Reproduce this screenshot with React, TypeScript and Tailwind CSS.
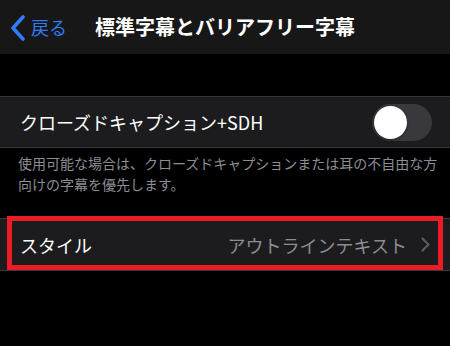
import React from "react";

export default function App() {
  const jp = { fontFamily: '"Noto Sans CJK JP", "Noto Sans", sans-serif' };
  return (
    <div className="w-[450px] h-[346px] bg-black overflow-hidden" style={jp}>
      {/* Header */}
      <div className="relative h-[54px] bg-[#171717] flex items-center">
        <div className="flex items-center pl-[10px] gap-[5px] text-[#2f7cf6]">
          <svg width="16" height="26" viewBox="0 0 16 26" className="mt-[1px]">
            <polyline
              points="13,2 3,13 13,24"
              fill="none"
              stroke="#2f7cf6"
              strokeWidth="3.6"
              strokeLinecap="round"
              strokeLinejoin="round"
            />
          </svg>
          <span className="text-[18px] leading-none">戻る</span>
        </div>
        <div className="absolute inset-0 flex items-center justify-center pointer-events-none">
          <span className="text-[20px] font-bold text-white leading-none">標準字幕とバリアフリー字幕</span>
        </div>
      </div>

      <div className="h-[42px]" />

      {/* Cell 1 */}
      <div className="h-[52px] bg-[#1c1c1e] border-y border-[#38383a] flex items-center justify-between pl-[20px] pr-[18px]">
        <span className="text-[18px] text-white leading-none">クローズドキャプション+SDH</span>
        <div className="w-[60px] h-[37px] rounded-full bg-[#39393d] p-[2px] flex items-center">
          <div className="w-[33px] h-[33px] rounded-full bg-white shadow-[0_1px_3px_rgba(0,0,0,0.4)]" />
        </div>
      </div>

      {/* Footer */}
      <div className="pl-[18px] pr-[10px] pt-[5px] text-[14px] leading-[21px] text-[#8d8d93]">
        使用可能な場合は、クローズドキャプションまたは耳の不自由な方
        <br />
        向けの字幕を優先します。
      </div>

      <div className="h-[23px]" />

      {/* Cell 2 */}
      <div className="relative h-[53px] bg-[#1c1c1e] border-y border-[#38383a] flex items-center justify-between pl-[20px] pr-[20px]">
        <span className="text-[18px] text-white leading-none">スタイル</span>
        <div className="flex items-center gap-[14px]">
          <span className="text-[18px] text-[#8d8d93] leading-none">アウトラインテキスト</span>
          <svg width="9" height="15" viewBox="0 0 9 15">
            <polyline
              points="1.5,1.5 7.5,7.5 1.5,13.5"
              fill="none"
              stroke="#5b5b60"
              strokeWidth="2.2"
              strokeLinecap="round"
              strokeLinejoin="round"
            />
          </svg>
        </div>
        <div className="absolute left-[7px] right-[7px] top-[-3px] bottom-0 border-[5px] border-[#ec1c24] pointer-events-none" />
      </div>
    </div>
  );
}
